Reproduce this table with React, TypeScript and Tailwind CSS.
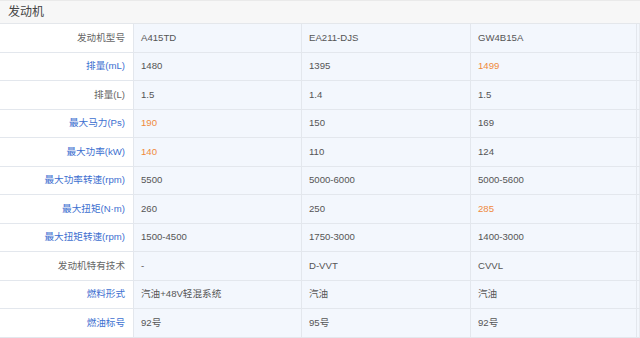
const rows: { label: string; hl?: boolean; vals: string[]; orange?: number[] }[] = [
  { label: "发动机型号", vals: ["A415TD", "EA211-DJS", "GW4B15A"] },
  { label: "排量(mL)", hl: true, vals: ["1480", "1395", "1499"], orange: [2] },
  { label: "排量(L)", vals: ["1.5", "1.4", "1.5"] },
  { label: "最大马力(Ps)", hl: true, vals: ["190", "150", "169"], orange: [0] },
  { label: "最大功率(kW)", hl: true, vals: ["140", "110", "124"], orange: [0] },
  { label: "最大功率转速(rpm)", hl: true, vals: ["5500", "5000-6000", "5000-5600"] },
  { label: "最大扭矩(N·m)", hl: true, vals: ["260", "250", "285"], orange: [2] },
  { label: "最大扭矩转速(rpm)", hl: true, vals: ["1500-4500", "1750-3000", "1400-3000"] },
  { label: "发动机特有技术", vals: ["-", "D-VVT", "CVVL"] },
  { label: "燃料形式", hl: true, vals: ["汽油+48V轻混系统", "汽油", "汽油"] },
  { label: "燃油标号", hl: true, vals: ["92号", "95号", "92号"] },
];

const widths = ["w-[168px]", "w-[169px]", "w-[166px]"];

export default function App() {
  return (
    <div
      className="w-[640px] h-[338px] overflow-hidden bg-white text-[9.6px]"
      style={{ fontFamily: '"Liberation Sans", "Noto Sans CJK SC", sans-serif' }}
    >
      <div className="h-[24px] flex items-center pl-[8px] bg-[#f7f7f7] border-t border-[#eaeaea] border-b border-b-[#e4e7eb] text-[12px] text-[#444]">
        发动机
      </div>
      {rows.map((r) => (
        <div key={r.label} className="flex h-[28.5px] border-b border-[#e3e7ed]">
          <div
            className={`w-[134px] shrink-0 flex items-center justify-end pr-[8px] border-r border-[#e3e7ed] ${
              r.hl ? "text-[#3d6fd0]" : "text-[#666]"
            }`}
          >
            {r.label}
          </div>
          {r.vals.map((v, i) => (
            <div
              key={i}
              className={`${widths[i]} shrink-0 flex items-center pl-[7px] bg-[#f3f7fd] border-r border-[#e3e7ed] ${
                r.orange?.includes(i) ? "text-[#f08a3c]" : "text-[#555]"
              }`}
            >
              {v}
            </div>
          ))}
          <div className="w-[3px] shrink-0 bg-[#f3f7fd] border-r border-[#e8ebf0]" />
        </div>
      ))}
    </div>
  );
}
